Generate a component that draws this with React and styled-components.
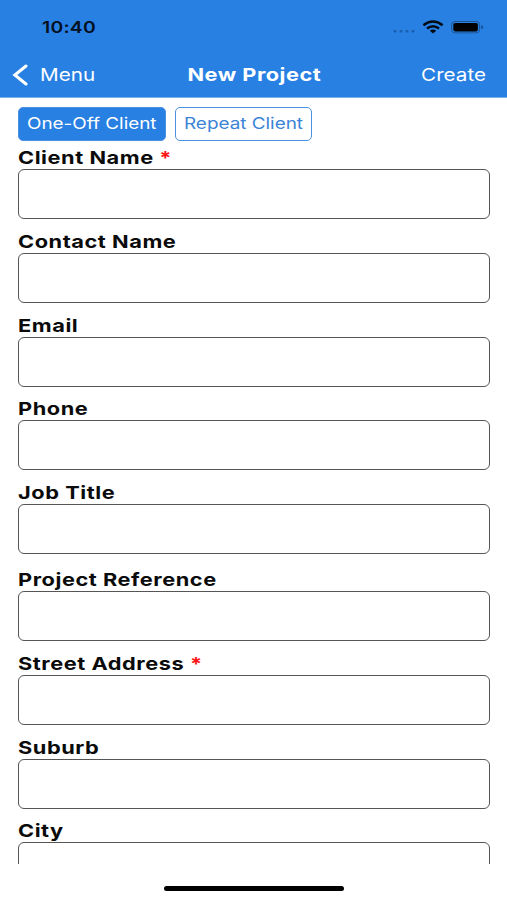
import React, { useState } from 'react';
import styled, { createGlobalStyle } from 'styled-components';

const GlobalStyle = createGlobalStyle`
  * {
    box-sizing: border-box;
  }

  body {
    margin: 0;
    background: #fff;
    font-family: Inter, 'Liberation Sans', sans-serif;
  }
`

const Screen = styled.div`
  display: flex;
  flex-direction: column;
  height: 900px;
  width: 507px;
  overflow: hidden;
  background: #fff;
`

// widens the glyphs without touching their height
const Wide = styled.span`
  display: block;
  white-space: nowrap;
  transform: scaleX(${props => props.$x || 1.21});
  transform-origin: ${props => props.$from || 'left'} center;
`

const Header = styled.header`
  flex: none;
  height: 98px;
  background: #2880e3;
  border-bottom: 1px solid #79afed;
`

const StatusBar = styled.div`
  display: flex;
  align-items: center;
  justify-content: space-between;
  height: 54px;
  padding: 0 23px 0 41.5px;
`

const Time = styled.div`
  color: #04101f;
  font-size: 16px;
  font-weight: 600;
  letter-spacing: 0.2px;
`

const NavBar = styled.nav`
  display: grid;
  grid-template-columns: 1fr auto 1fr;
  align-items: center;
  height: 41px;
  padding: 0 10px 0 12px;
  color: #fff;
`

const NavButton = styled.button`
  display: flex;
  align-items: center;
  gap: 11px;
  justify-self: ${props => props.$end ? 'end' : 'start'};
  padding: 0 ${props => props.$end ? 11 : 0}px 0 0;
  border: 0;
  background: none;
  color: #fff;
  font: 400 17.5px Inter, sans-serif;
`

const Title = styled.h1`
  margin: 0;
  font-size: 18px;
  font-weight: 700;
  letter-spacing: 0.4px;
`

const Form = styled.main`
  flex: none;
  height: 766px;
  padding: 8.5px 17px 0 17.5px;
  overflow: hidden;
`

const ClientTypes = styled.div`
  display: flex;
  gap: 9px;
  height: 34px;
  margin-bottom: 0.5px;
`

const ClientType = styled.button`
  width: ${props => props.$width}px;
  padding: 0 0 1px 8px;
  border: 1px solid #4b91e2;
  border-radius: 5px;
  background: ${props => props.$active ? '#2880e3' : '#fff'};
  color: ${props => props.$active ? '#fff' : '#3b83d6'};
  font: 400 16px Inter, sans-serif;
  text-align: left;
`

const Field = styled.label`
  display: block;
  height: 83.8px;
  margin-top: ${props => props.$spaced ? 3 : 0}px;
`

const Label = styled.span`
  display: flex;
  align-items: center;
  height: 28px;
  padding-top: 5px;
  color: #0b0b0b;
  font-size: 18px;
  font-weight: 700;
  letter-spacing: 0.45px;
`

const Required = styled.span`
  color: #fa1414;
`

const Input = styled.input`
  display: block;
  width: 100%;
  height: 50px;
  padding: 0 10px;
  border: 1px solid #555;
  border-radius: 6px;
  background: #fff;
  font: 400 18px Inter, sans-serif;
  outline: none;
`

const Footer = styled.footer`
  display: flex;
  flex: 1;
  justify-content: center;
  padding-top: 22px;
`

const HomeIndicator = styled.div`
  width: 180px;
  height: 5px;
  border-radius: 3px;
  background: #000;
`

const clientTypes = [
  { name: 'One-Off Client', width: 148.6 },
  { name: 'Repeat Client', width: 137.4 },
];

const fields = [
  { name: 'Client Name', required: true },
  { name: 'Contact Name' },
  { name: 'Email' },
  { name: 'Phone' },
  { name: 'Job Title' },
  { name: 'Project Reference', spaced: true },
  { name: 'Street Address', required: true },
  { name: 'Suburb' },
  { name: 'City' },
];

const StatusIcons = () => (
  <svg width="92" height="16" viewBox="392 19 92 16">
    <g fill="#1b5faf">
      <rect x="393.5" y="30" width="3" height="2.4" rx="1" />
      <rect x="399.5" y="30" width="3" height="2.4" rx="1" />
      <rect x="405.5" y="30" width="3" height="2.4" rx="1" />
      <rect x="411.5" y="30" width="3" height="2.4" rx="1" />
    </g>
    <g fill="none" stroke="#020a14" strokeWidth="2.5">
      <path d="M423.4 25.3Q433 17.7 442.6 25.3" />
      <path d="M427 28.6Q433 23.8 439 28.6" />
    </g>
    <path d="M429.8 30.7Q433 28.2 436.2 30.7L433 33.4Z" fill="#020a14" />
    <rect x="451.6" y="21.5" width="28" height="11.4" rx="3.4" fill="none" stroke="#1b5496" />
    <rect x="453.3" y="23" width="24.6" height="8.4" rx="1.8" fill="#000" />
    <path d="M481.2 25.3Q483.2 25.8 483.2 27.2T481.2 29.1Z" fill="#164d8f" />
  </svg>
)

const BackIcon = () => (
  <svg width="17" height="22" viewBox="0 0 17 22">
    <path d="M14 2L2.8 11L14 20" fill="none" stroke="#fff" strokeWidth="3" strokeLinecap="round" />
  </svg>
)

const FormField = ( {field} ) => {
  return (
    <Field $spaced={field.spaced}>
      <Label>
        <Wide>{field.name}{field.required && <Required> *</Required>}</Wide>
      </Label>
      <Input type='text' />
    </Field>
  )
}

const App = () => {
  const [active, setActive] = useState('One-Off Client');

  return (
    <Screen>
      <GlobalStyle />
      <Header>
        <StatusBar>
          <Time><Wide>10:40</Wide></Time>
          <StatusIcons />
        </StatusBar>
        <NavBar>
          <NavButton><BackIcon /><Wide $x={1.18}>Menu</Wide></NavButton>
          <Title><Wide $from='center'>New Project</Wide></Title>
          <NavButton $end><Wide $x={1.18} $from='right'>Create</Wide></NavButton>
        </NavBar>
      </Header>
      <Form>
        <ClientTypes>
          {clientTypes.map(type => (
            <ClientType
              key={type.name}
              $width={type.width}
              $active={type.name === active}
              onClick={() => setActive(type.name)}
            >
              <Wide $x={1.18}>{type.name}</Wide>
            </ClientType>
          ))}
        </ClientTypes>
        {fields.map(field => <FormField key={field.name} field={field} />)}
      </Form>
      <Footer>
        <HomeIndicator />
      </Footer>
    </Screen>
  )
}

export default App;
